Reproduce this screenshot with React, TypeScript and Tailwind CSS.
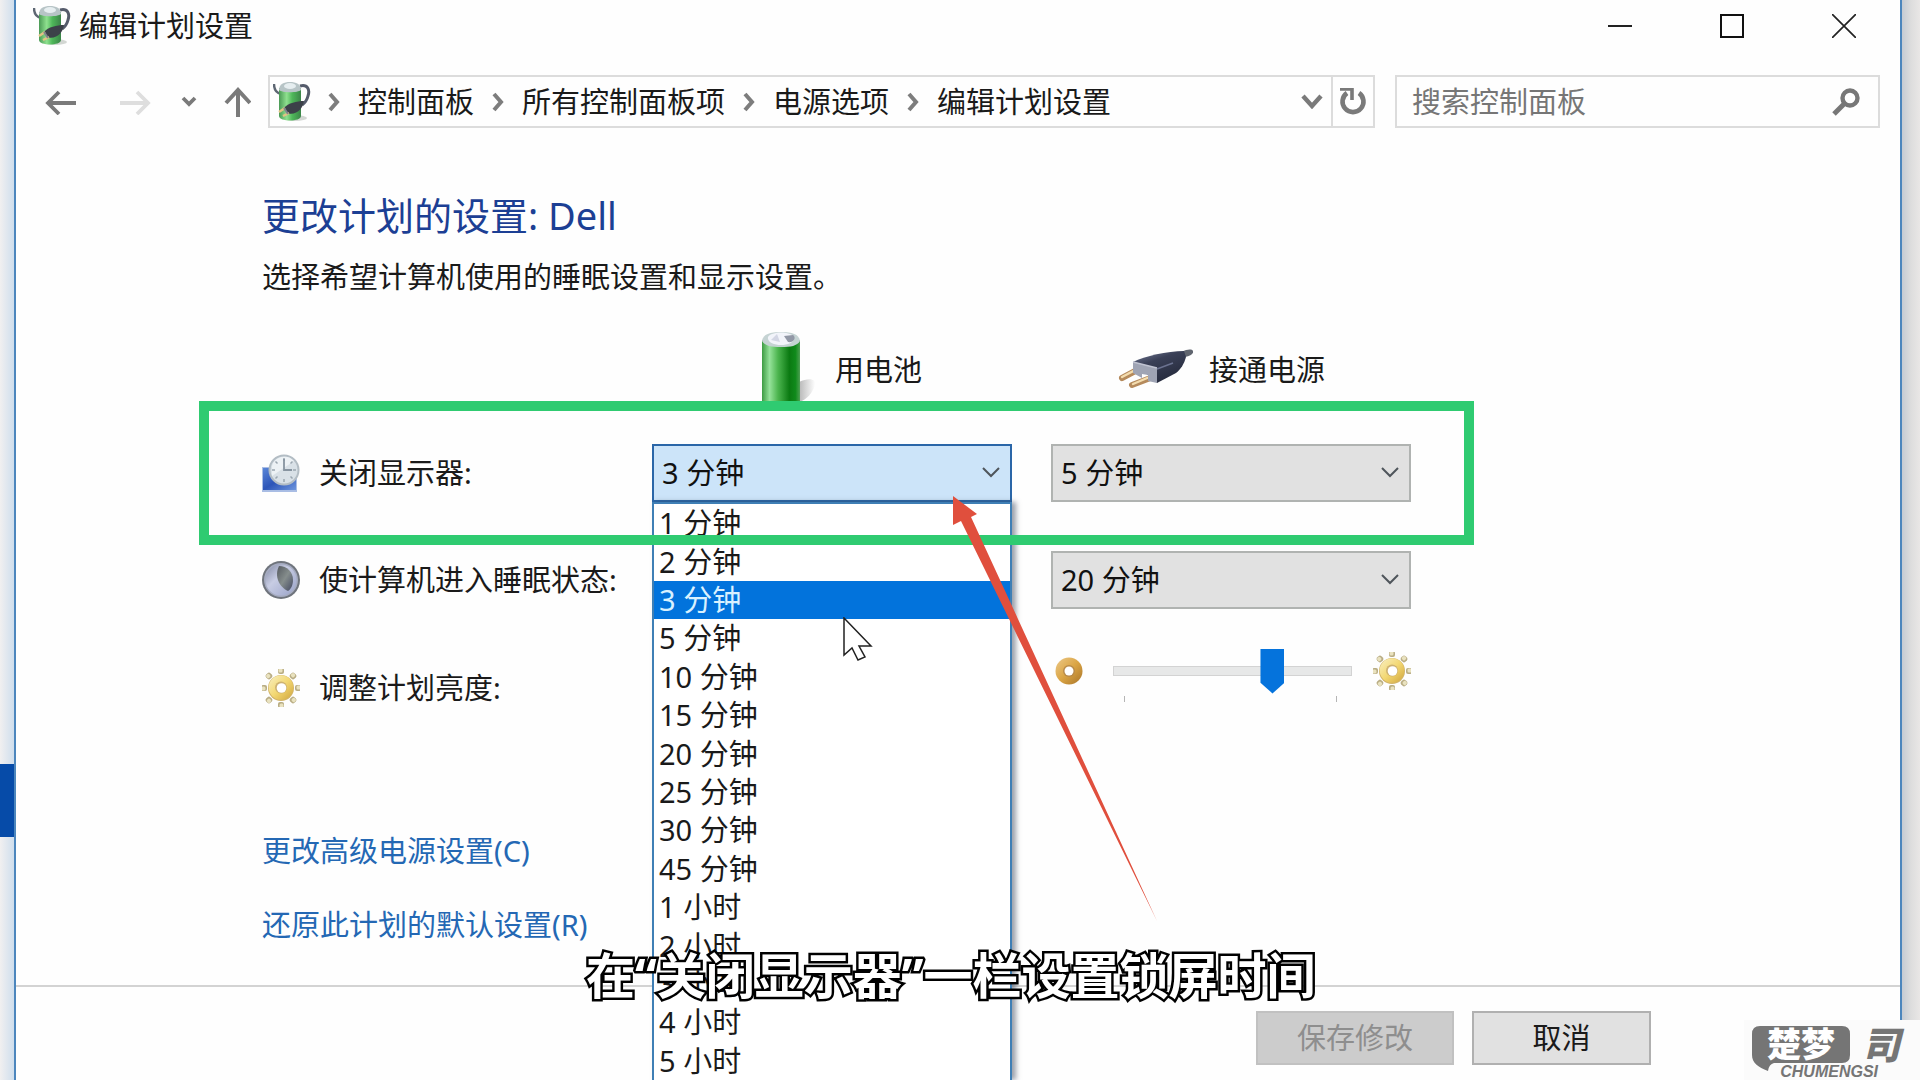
import { useState, type ReactNode } from "react";

const breadcrumbs = ["控制面板", "所有控制面板项", "电源选项", "编辑计划设置"];

const durations = [
  "1 分钟",
  "2 分钟",
  "3 分钟",
  "5 分钟",
  "10 分钟",
  "15 分钟",
  "20 分钟",
  "25 分钟",
  "30 分钟",
  "45 分钟",
  "1 小时",
  "2 小时",
  "3 小时",
  "4 小时",
  "5 小时",
];

function PlanIcon() {
  return (
    <svg viewBox="0 0 38 40" className="h-[40px] w-[38px] shrink-0" aria-hidden="true">
      <defs>
        <linearGradient id="plan-body" x1="0" x2="1">
          <stop offset="0" stopColor="#4a9a55" />
          <stop offset="0.35" stopColor="#8fe08f" />
          <stop offset="0.6" stopColor="#4fb85a" />
          <stop offset="1" stopColor="#3b8548" />
        </linearGradient>
      </defs>
      <ellipse cx="22" cy="36" rx="12" ry="3" fill="#d3d7d3" />
      <path d="M1 2c0 5 2 9 7 10" fill="none" stroke="#5d6672" strokeWidth="2.4" />
      <path d="M27 4c8-2 10 4 8 10-1 4-3 7-6 9" fill="none" stroke="#555b6b" strokeWidth="3" />
      <path d="M6 6v28c0 6 22 6 22 0V6z" fill="url(#plan-body)" />
      <path d="M6 8C6 2 11 0 17 0s11 2 11 8c-3 3-19 3-22 0z" fill="#b7c4c6" />
      <ellipse cx="17" cy="4" rx="6" ry="3" fill="#e6eef0" />
      <path d="M31 19c-7 0-16 2-20 7l4 6c8 0 14-3 16-13z" fill="#3c4149" />
      <path d="M12 26l-6 4M16 31l-6 3" stroke="#e2c384" strokeWidth="2.4" />
      <path d="M11 26l4 6" stroke="#80858e" strokeWidth="2" />
    </svg>
  );
}

function BatteryIcon() {
  return (
    <svg viewBox="0 0 58 76" className="h-[76px] w-[58px] shrink-0" aria-hidden="true">
      <defs>
        <linearGradient id="battery-body" x1="0" x2="1">
          <stop offset="0" stopColor="#3d9b43" />
          <stop offset="0.2" stopColor="#95e29a" />
          <stop offset="0.42" stopColor="#4cb54f" />
          <stop offset="0.72" stopColor="#0b7a12" />
          <stop offset="0.88" stopColor="#108a1b" />
          <stop offset="1" stopColor="#4d9f52" />
        </linearGradient>
        <linearGradient id="battery-shadow" x1="0" x2="1">
          <stop offset="0" stopColor="#9a9a9a" />
          <stop offset="1" stopColor="#ffffff" />
        </linearGradient>
      </defs>
      <path d="M38 50c10-5 18-3 16 3-2 7-8 15-16 17z" fill="url(#battery-shadow)" opacity="0.7" />
      <path d="M1 8v63c0 5 38 5 38 0V8z" fill="url(#battery-body)" />
      <path d="M1 9C2 2 9 0 20 0s18 2 19 9c-3 5-9 6-19 6S4 14 1 9z" fill="#c5d3d3" />
      <path d="M7 5c3-6 23-6 26 0 1 5-6 8-13 8S6 10 7 5z" fill="#f2f4fa" />
      <path d="M23 4l9-1c4 3 0 8-5 7z" fill="#9298a6" />
      <path d="M10 8l6-6 3 8z" fill="#d3d6e4" />
    </svg>
  );
}

function PlugIcon() {
  return (
    <svg viewBox="0 0 75 42" className="h-[42px] w-[75px] shrink-0" aria-hidden="true">
      <defs>
        <linearGradient id="plug-body" x1="0" y1="0" x2="0.6" y2="1">
          <stop offset="0" stopColor="#7a819c" />
          <stop offset="0.4" stopColor="#3a4057" />
          <stop offset="1" stopColor="#252a3c" />
        </linearGradient>
      </defs>
      <path d="M64 3c5-3 10-3 11-1s-2 5-8 6z" fill="#60656f" />
      <path d="M21 20L4 29M35 28L14 36" stroke="#b58a5c" strokeWidth="6" strokeLinecap="round" />
      <path d="M21 19L4 28M34 27L15 35" stroke="#f3dcae" strokeWidth="2.4" strokeLinecap="round" />
      <path d="M15 13C27 7 49 2 66 2l2 6c-2 7-5 12-10 16l-19 10z" fill="url(#plug-body)" />
      <path d="M15 13l24 6v15l-9-2v-6l-6-1v4l-9-5z" fill="#9fa4b4" />
      <path d="M15 13l24 6" stroke="#c0c4d2" strokeWidth="1.5" />
      <path d="M39 20l16-6" stroke="#6b7290" strokeWidth="1.5" />
    </svg>
  );
}

function DisplayClockIcon() {
  return (
    <svg viewBox="0 0 38 38" className="size-[38px] shrink-0" aria-hidden="true">
      <defs>
        <linearGradient id="clock-screen" x1="0" y1="0" x2="1" y2="1">
          <stop offset="0" stopColor="#5a86d8" />
          <stop offset="0.5" stopColor="#2c55b8" />
          <stop offset="1" stopColor="#6d95dd" />
        </linearGradient>
      </defs>
      <path d="M0 13h35v25H0z" fill="#a9bde4" />
      <path d="M1 14h33v22H1z" fill="url(#clock-screen)" />
      <circle cx="22" cy="16" r="15.5" fill="#b3bdc4" />
      <circle cx="22" cy="16" r="13.5" fill="#d9e1e7" />
      <path d="M10 12a13 13 0 0 1 22-5L10 22z" fill="#edf2f5" />
      <path
        d="M22 4v3M22 25v3M10 16h3M31 16h3M13.500 7.500l2 2M28.500 22.500l2 2M13.500 24.500l2-2M28.500 9.500l2-2"
        stroke="#9aa6b0"
        strokeWidth="1.5"
      />
      <path d="M22 5v11h8" fill="none" stroke="#8794a0" strokeWidth="1.8" />
    </svg>
  );
}

function MoonIcon() {
  return (
    <svg viewBox="0 0 38 38" className="size-[38px] shrink-0" aria-hidden="true">
      <defs>
        <linearGradient id="moon-disc" x1="0" y1="0" x2="1" y2="1">
          <stop offset="0" stopColor="#8188a2" />
          <stop offset="0.4" stopColor="#c8cde4" />
          <stop offset="1" stopColor="#99a2c8" />
        </linearGradient>
        <linearGradient id="moon-dark" x1="0" y1="0" x2="1" y2="1">
          <stop offset="0" stopColor="#555a60" />
          <stop offset="0.5" stopColor="#858d8c" />
          <stop offset="1" stopColor="#434962" />
        </linearGradient>
      </defs>
      <circle cx="19" cy="19" r="19" fill="#6f747c" />
      <circle cx="19" cy="19" r="17" fill="#a5abc0" />
      <circle cx="19" cy="19" r="15.500" fill="url(#moon-disc)" />
      <path d="M17 5c8 0 14 6 14 14 0 5-2 9-5 11C17 26 12 15 17 5z" fill="url(#moon-dark)" />
    </svg>
  );
}

function SunIcon() {
  return (
    <svg viewBox="0 0 38 38" className="size-[38px] shrink-0" aria-hidden="true">
      <defs>
        <linearGradient id="sun-ring" x1="0" y1="0" x2="1" y2="1">
          <stop offset="0" stopColor="#f8f0c4" />
          <stop offset="0.5" stopColor="#f3d873" />
          <stop offset="1" stopColor="#d0a53c" />
        </linearGradient>
      </defs>
      {[0, 45, 90, 135, 180, 225, 270, 315].map((angle) => (
        <g key={angle} transform={`rotate(${angle} 19 19)`}>
          <rect x="16" y="-1" width="6" height="6" rx="2" fill="#b9ad84" />
          <rect x="16.500" y="-0.500" width="4" height="4" rx="1.500" fill="#e9e2bf" />
        </g>
      ))}
      <circle cx="19" cy="19" r="13" fill="#d2b468" />
      <circle cx="19" cy="18.500" r="12.300" fill="url(#sun-ring)" />
      <circle cx="19" cy="18.500" r="6" fill="#cdb272" />
      <circle cx="19.500" cy="19" r="4.800" fill="#ffffff" />
    </svg>
  );
}

function DimIcon() {
  return (
    <svg viewBox="0 0 28 28" className="size-[28px] shrink-0" aria-hidden="true">
      <defs>
        <linearGradient id="dim-ring" x1="0" y1="0" x2="1" y2="1">
          <stop offset="0" stopColor="#ecc98a" />
          <stop offset="0.5" stopColor="#dba544" />
          <stop offset="1" stopColor="#a8742a" />
        </linearGradient>
      </defs>
      <circle cx="14" cy="14" r="13.500" fill="url(#dim-ring)" />
      <circle cx="14" cy="14" r="6" fill="#b98b4a" />
      <circle cx="14" cy="14" r="4.500" fill="#ffffff" />
    </svg>
  );
}

function CrumbChevron() {
  return (
    <svg viewBox="0 0 12 20" className="h-[20px] w-[12px] shrink-0" aria-hidden="true">
      <path d="M2 2l7 8-7 8" fill="none" stroke="#7d7d7d" strokeWidth="4" />
    </svg>
  );
}

type DurationSelectProps = {
  id: string;
  label: string;
  value: string;
  open?: boolean;
  onChange: (value: string) => void;
};

function DurationSelect({ id, label, value, open, onChange }: DurationSelectProps) {
  return (
    <div className="relative">
      <select
        id={id}
        aria-label={label}
        value={value}
        onChange={(e) => onChange(e.target.value)}
        className={
          open
            ? "h-[58px] w-full appearance-none border-2 border-[#2a66a8] bg-[#cce4f9] pl-2 text-[#111]"
            : "h-[58px] w-full appearance-none border-2 border-[#b0b3b1] bg-[#e1e1e1] pl-2 text-[#111]"
        }
      >
        {durations.map((d) => (
          <option key={d}>{d}</option>
        ))}
      </select>
      <svg
        viewBox="0 0 18 11"
        className="pointer-events-none absolute top-[23px] right-3 h-[11px] w-[18px]"
        aria-hidden="true"
      >
        <path d="M1 1l8 8 8-8" fill="none" stroke="#4f555b" strokeWidth="2" />
      </svg>
      {open && (
        <ul
          role="listbox"
          aria-label={label}
          className="absolute inset-x-0 top-full z-10 grid h-[578px] auto-rows-fr border-x-2 border-t-2 border-[#3f7fb5] bg-white shadow-[4px_0_5px_rgba(60,70,90,0.5)]"
        >
          {durations.map((d) => (
            <li
              key={d}
              role="option"
              aria-selected={d === value}
              onClick={() => onChange(d)}
              className={
                d === value
                  ? "flex items-center bg-[#0273dc] pl-[5px] text-[#d9f1ff]"
                  : "flex items-center pl-[5px] text-[#1a1a1a]"
              }
            >
              {d}
            </li>
          ))}
        </ul>
      )}
    </div>
  );
}

function RowLabel({ icon, htmlFor, children }: { icon: ReactNode; htmlFor: string; children: ReactNode }) {
  return (
    <label htmlFor={htmlFor} className="flex items-center gap-[19px] whitespace-nowrap">
      {icon}
      <span>{children}</span>
    </label>
  );
}

function TitleBar() {
  return (
    <header className="flex h-[52px] items-center">
      <div className="flex flex-1 items-center gap-2 pl-[17px]">
        <PlanIcon />
        <span>编辑计划设置</span>
      </div>
      <button type="button" aria-label="最小化" className="flex h-full w-28 items-center justify-center">
        <svg viewBox="0 0 24 24" className="size-6">
          <path d="M0 12h24" stroke="#222" strokeWidth="2" />
        </svg>
      </button>
      <button type="button" aria-label="最大化" className="flex h-full w-28 items-center justify-center">
        <svg viewBox="0 0 24 24" className="size-6">
          <path d="M1 1h22v22H1z" fill="none" stroke="#111" strokeWidth="2" />
        </svg>
      </button>
      <button type="button" aria-label="关闭" className="flex h-full w-28 items-center justify-center">
        <svg viewBox="0 0 24 24" className="size-6">
          <path d="M0 0l24 24M24 0L0 24" stroke="#222" strokeWidth="1.700" />
        </svg>
      </button>
    </header>
  );
}

function NavBar() {
  return (
    <nav className="mt-[23px] flex h-[53px] items-center pr-[20px] pl-2">
      <button type="button" aria-label="后退" className="flex w-[74px] justify-center">
        <svg viewBox="0 0 32 26" className="h-[26px] w-[32px]">
          <path d="M31 14H3M14 3L3 14l11 11" fill="none" stroke="#7a7a7a" strokeWidth="3.800" />
        </svg>
      </button>
      <button type="button" aria-label="前进" className="flex w-[74px] justify-center">
        <svg viewBox="0 0 32 26" className="h-[26px] w-[32px]">
          <path d="M1 14h28M18 3l11 11-11 11" fill="none" stroke="#dedede" strokeWidth="3.800" />
        </svg>
      </button>
      <button type="button" aria-label="最近位置" className="flex w-[34px] justify-center">
        <svg viewBox="0 0 16 12" className="h-[12px] w-[16px]">
          <path d="M2 2l6 6 6-6" fill="none" stroke="#7a7a7a" strokeWidth="3.800" />
        </svg>
      </button>
      <button type="button" aria-label="上移" className="flex w-[62px] justify-center">
        <svg viewBox="0 0 28 30" className="h-[30px] w-[28px]">
          <path d="M15 30V3M3 16L15 3l12 13" fill="none" stroke="#7a7a7a" strokeWidth="4" />
        </svg>
      </button>

      <div className="flex h-full flex-1 items-center border-2 border-[#dcdcdc] pl-[3px]">
        <PlanIcon />
        <ol className="flex flex-1 items-center gap-[18px] pl-[17px]">
          {breadcrumbs.map((crumb) => (
            <li key={crumb} className="flex items-center gap-[18px]">
              <CrumbChevron />
              <a href="#">{crumb}</a>
            </li>
          ))}
        </ol>
        <button type="button" aria-label="展开地址" className="flex w-[38px] justify-center">
          <svg viewBox="0 0 22 15" className="h-[15px] w-[22px]">
            <path d="M2 2l9 10 9-10" fill="none" stroke="#7a7a7a" strokeWidth="4.400" />
          </svg>
        </button>
        <button
          type="button"
          aria-label="刷新"
          className="flex h-full w-[42px] items-center justify-center border-l-2 border-[#dcdcdc]"
        >
          <svg viewBox="0 0 28 28" className="size-7">
            <path d="M20 5a10.500 10.500 0 1 1-12 0" fill="none" stroke="#7a7a7a" strokeWidth="4.600" />
            <path d="M1 1h12v11" fill="none" stroke="#7a7a7a" strokeWidth="3.600" />
          </svg>
        </button>
      </div>

      <div className="ml-5 flex h-full w-[485px] items-center border-2 border-[#dcdcdc] pr-[18px] pl-[15px]">
        <input
          type="text"
          aria-label="搜索控制面板"
          placeholder="搜索控制面板"
          className="min-w-0 flex-1 bg-transparent outline-none placeholder:text-[#767676]"
        />
        <svg viewBox="0 0 28 28" className="size-7 shrink-0" aria-hidden="true">
          <circle cx="18" cy="10" r="7.500" fill="none" stroke="#777" strokeWidth="4.400" />
          <path d="M13 15L2 26" stroke="#777" strokeWidth="5" />
        </svg>
      </div>
    </nav>
  );
}

function Watermark() {
  return (
    <div className="absolute right-0 bottom-0 z-30 h-[60px] w-[176px] bg-[#fbfbfb] font-bold text-[#757575]">
      <div className="flex items-start gap-3 pt-[6px] pl-2">
        <div className="relative h-[37px] w-[98px]">
          <svg viewBox="0 0 98 46" className="absolute top-0 left-0 h-[46px] w-[98px]" aria-hidden="true">
            <path
              d="M8 0h82q8 0 8 8v21q0 8-8 8H22q-5 1-6 8C6 41 0 37 0 29V8q0-8 8-8z"
              fill="#757575"
            />
          </svg>
          <span className="relative block text-center text-[34px] leading-[36px] font-black text-white">楚梦</span>
        </div>
        <span className="text-[38px] leading-[36px] font-black italic">司</span>
      </div>
      <span className="absolute right-[42px] bottom-0 font-['Liberation_Sans',sans-serif] text-[16px] leading-[16px] italic">
        CHUMENGSI
      </span>
    </div>
  );
}

export default function App() {
  const [displayBattery, setDisplayBattery] = useState("3 分钟");
  const [displayPlugged, setDisplayPlugged] = useState("5 分钟");
  const [sleepPlugged, setSleepPlugged] = useState("20 分钟");
  const [brightness, setBrightness] = useState(69);

  return (
    <div className="relative flex min-h-screen overflow-hidden bg-white font-['Noto_Sans','Noto_Sans_CJK_SC',sans-serif] text-[29px] leading-[38px] text-[#1a1a1a]">
      {/* Desktop visible left of the window */}
      <div className="flex w-[14px] shrink-0 flex-col bg-linear-to-r from-[#f1f0f0] to-[#cfdeed]">
        <div className="mt-[764px] h-[73px] bg-[#064ba8]" />
      </div>

      <div className="flex min-w-0 flex-1 flex-col border-x-2 border-[#4c86bd] bg-[#fefefe]">
        <TitleBar />
        <NavBar />

        <main className="pl-[246px]">
          <h1 className="mt-[63px] text-[38px] leading-[48px] text-[#1c3f94]">更改计划的设置: Dell</h1>
          <p className="mt-[19px]">选择希望计算机使用的睡眠设置和显示设置。</p>

          <div className="mt-[36px] grid h-[76px] grid-cols-[351px_360px_360px] gap-x-[39px]">
            <div className="col-start-2 flex items-center gap-4 pl-[109px]">
              <BatteryIcon />
              <span>用电池</span>
            </div>
            <div className="flex items-center gap-4 pl-[67px]">
              <PlugIcon />
              <span>接通电源</span>
            </div>
          </div>

          <div className="relative mt-[36px] grid h-[58px] w-fit grid-cols-[351px_360px_360px] gap-x-[39px]">
            <RowLabel icon={<DisplayClockIcon />} htmlFor="display-battery">
              关闭显示器:
            </RowLabel>
            <DurationSelect
              id="display-battery"
              label="用电池时关闭显示器"
              value={displayBattery}
              onChange={setDisplayBattery}
              open
            />
            <DurationSelect
              id="display-plugged"
              label="接通电源时关闭显示器"
              value={displayPlugged}
              onChange={setDisplayPlugged}
            />
            {/* Green highlight frame round the row */}
            <div className="pointer-events-none absolute -inset-x-[63px] -inset-y-[43px] z-20 border-10 border-[#2fcb71]" />
          </div>

          <div className="mt-[49px] grid h-[58px] grid-cols-[351px_360px_360px] gap-x-[39px]">
            <RowLabel icon={<MoonIcon />} htmlFor="sleep-plugged">
              使计算机进入睡眠状态:
            </RowLabel>
            <div className="col-start-3">
              <DurationSelect
                id="sleep-plugged"
                label="接通电源时进入睡眠状态"
                value={sleepPlugged}
                onChange={setSleepPlugged}
              />
            </div>
          </div>

          <div className="mt-[39px] grid h-[80px] grid-cols-[351px_360px_360px] gap-x-[39px]">
            <RowLabel icon={<SunIcon />} htmlFor="brightness">
              调整计划亮度:
            </RowLabel>
            <div className="col-start-3">
              <div className="flex h-[45px] items-center justify-between pl-1">
                <DimIcon />
                <input
                  id="brightness"
                  type="range"
                  value={brightness}
                  onChange={(e) => setBrightness(Number(e.target.value))}
                  className="ml-2 h-[45px] w-[239px] appearance-none bg-transparent [&::-webkit-slider-runnable-track]:h-[10px] [&::-webkit-slider-runnable-track]:border [&::-webkit-slider-runnable-track]:border-[#d3d3d3] [&::-webkit-slider-runnable-track]:bg-[#e7e8e8] [&::-webkit-slider-thumb]:mt-[-18px] [&::-webkit-slider-thumb]:h-[45px] [&::-webkit-slider-thumb]:w-[24px] [&::-webkit-slider-thumb]:appearance-none [&::-webkit-slider-thumb]:bg-[#0573dc] [&::-webkit-slider-thumb]:[clip-path:polygon(0_0,100%_0,100%_76%,50%_100%,0_76%)]"
                />
                <SunIcon />
              </div>
              <div className="mt-[3px] ml-[60px] flex w-[239px] justify-between px-[13px]">
                <span className="h-[6px] w-px bg-[#b5b5b5]" />
                <span className="h-[6px] w-px bg-[#b5b5b5]" />
              </div>
            </div>
          </div>

          <div className="mt-[104px] flex flex-col items-start gap-[36px] text-[#2468b4]">
            <a href="#">更改高级电源设置(C)</a>
            <a href="#">还原此计划的默认设置(R)</a>
          </div>
        </main>

        <footer className="mt-[41px] flex flex-1 items-start justify-end gap-[18px] border-t-2 border-[#d3d3d3] pt-6 pr-[249px] pb-[15px]">
          <button
            type="button"
            disabled
            className="h-[54px] w-[198px] border-2 border-[#c1c1c1] bg-[#cccccc] text-[#8e8e8e]"
          >
            保存修改
          </button>
          <button type="button" className="h-[54px] w-[179px] border-2 border-[#b0b0b0] bg-[#e1e1e1]">
            取消
          </button>
        </footer>
      </div>

      {/* Window shadow on the right */}
      <div className="w-[18px] shrink-0 bg-linear-to-r from-[#c5cbd3] via-[#dddddd] to-[#e9e7e6]" />

      {/* Tutorial arrow and mouse pointer */}
      <svg
        viewBox="0 0 204 425"
        className="pointer-events-none absolute top-[496px] left-[953px] z-30 h-[425px] w-[204px]"
        aria-hidden="true"
      >
        <path d="M0 0l24 18-6 3L204 425 8 25l-8 4z" fill="#e04f3d" />
      </svg>
      <svg
        viewBox="0 0 30 44"
        className="pointer-events-none absolute top-[617px] left-[843px] z-30 h-[44px] w-[30px]"
        aria-hidden="true"
      >
        <path d="M1 1v37l8-7 6 12 7-3-6-11h12z" fill="#fff" stroke="#222" strokeWidth="1.500" />
      </svg>

      <p className="pointer-events-none absolute bottom-[75px] left-[586px] z-30 text-[49px] leading-[60px] font-bold whitespace-nowrap text-white [-webkit-text-stroke:5px_#000] [paint-order:stroke_fill]">
        在“关闭显示器”一栏设置锁屏时间
      </p>

      <Watermark />
    </div>
  );
}
